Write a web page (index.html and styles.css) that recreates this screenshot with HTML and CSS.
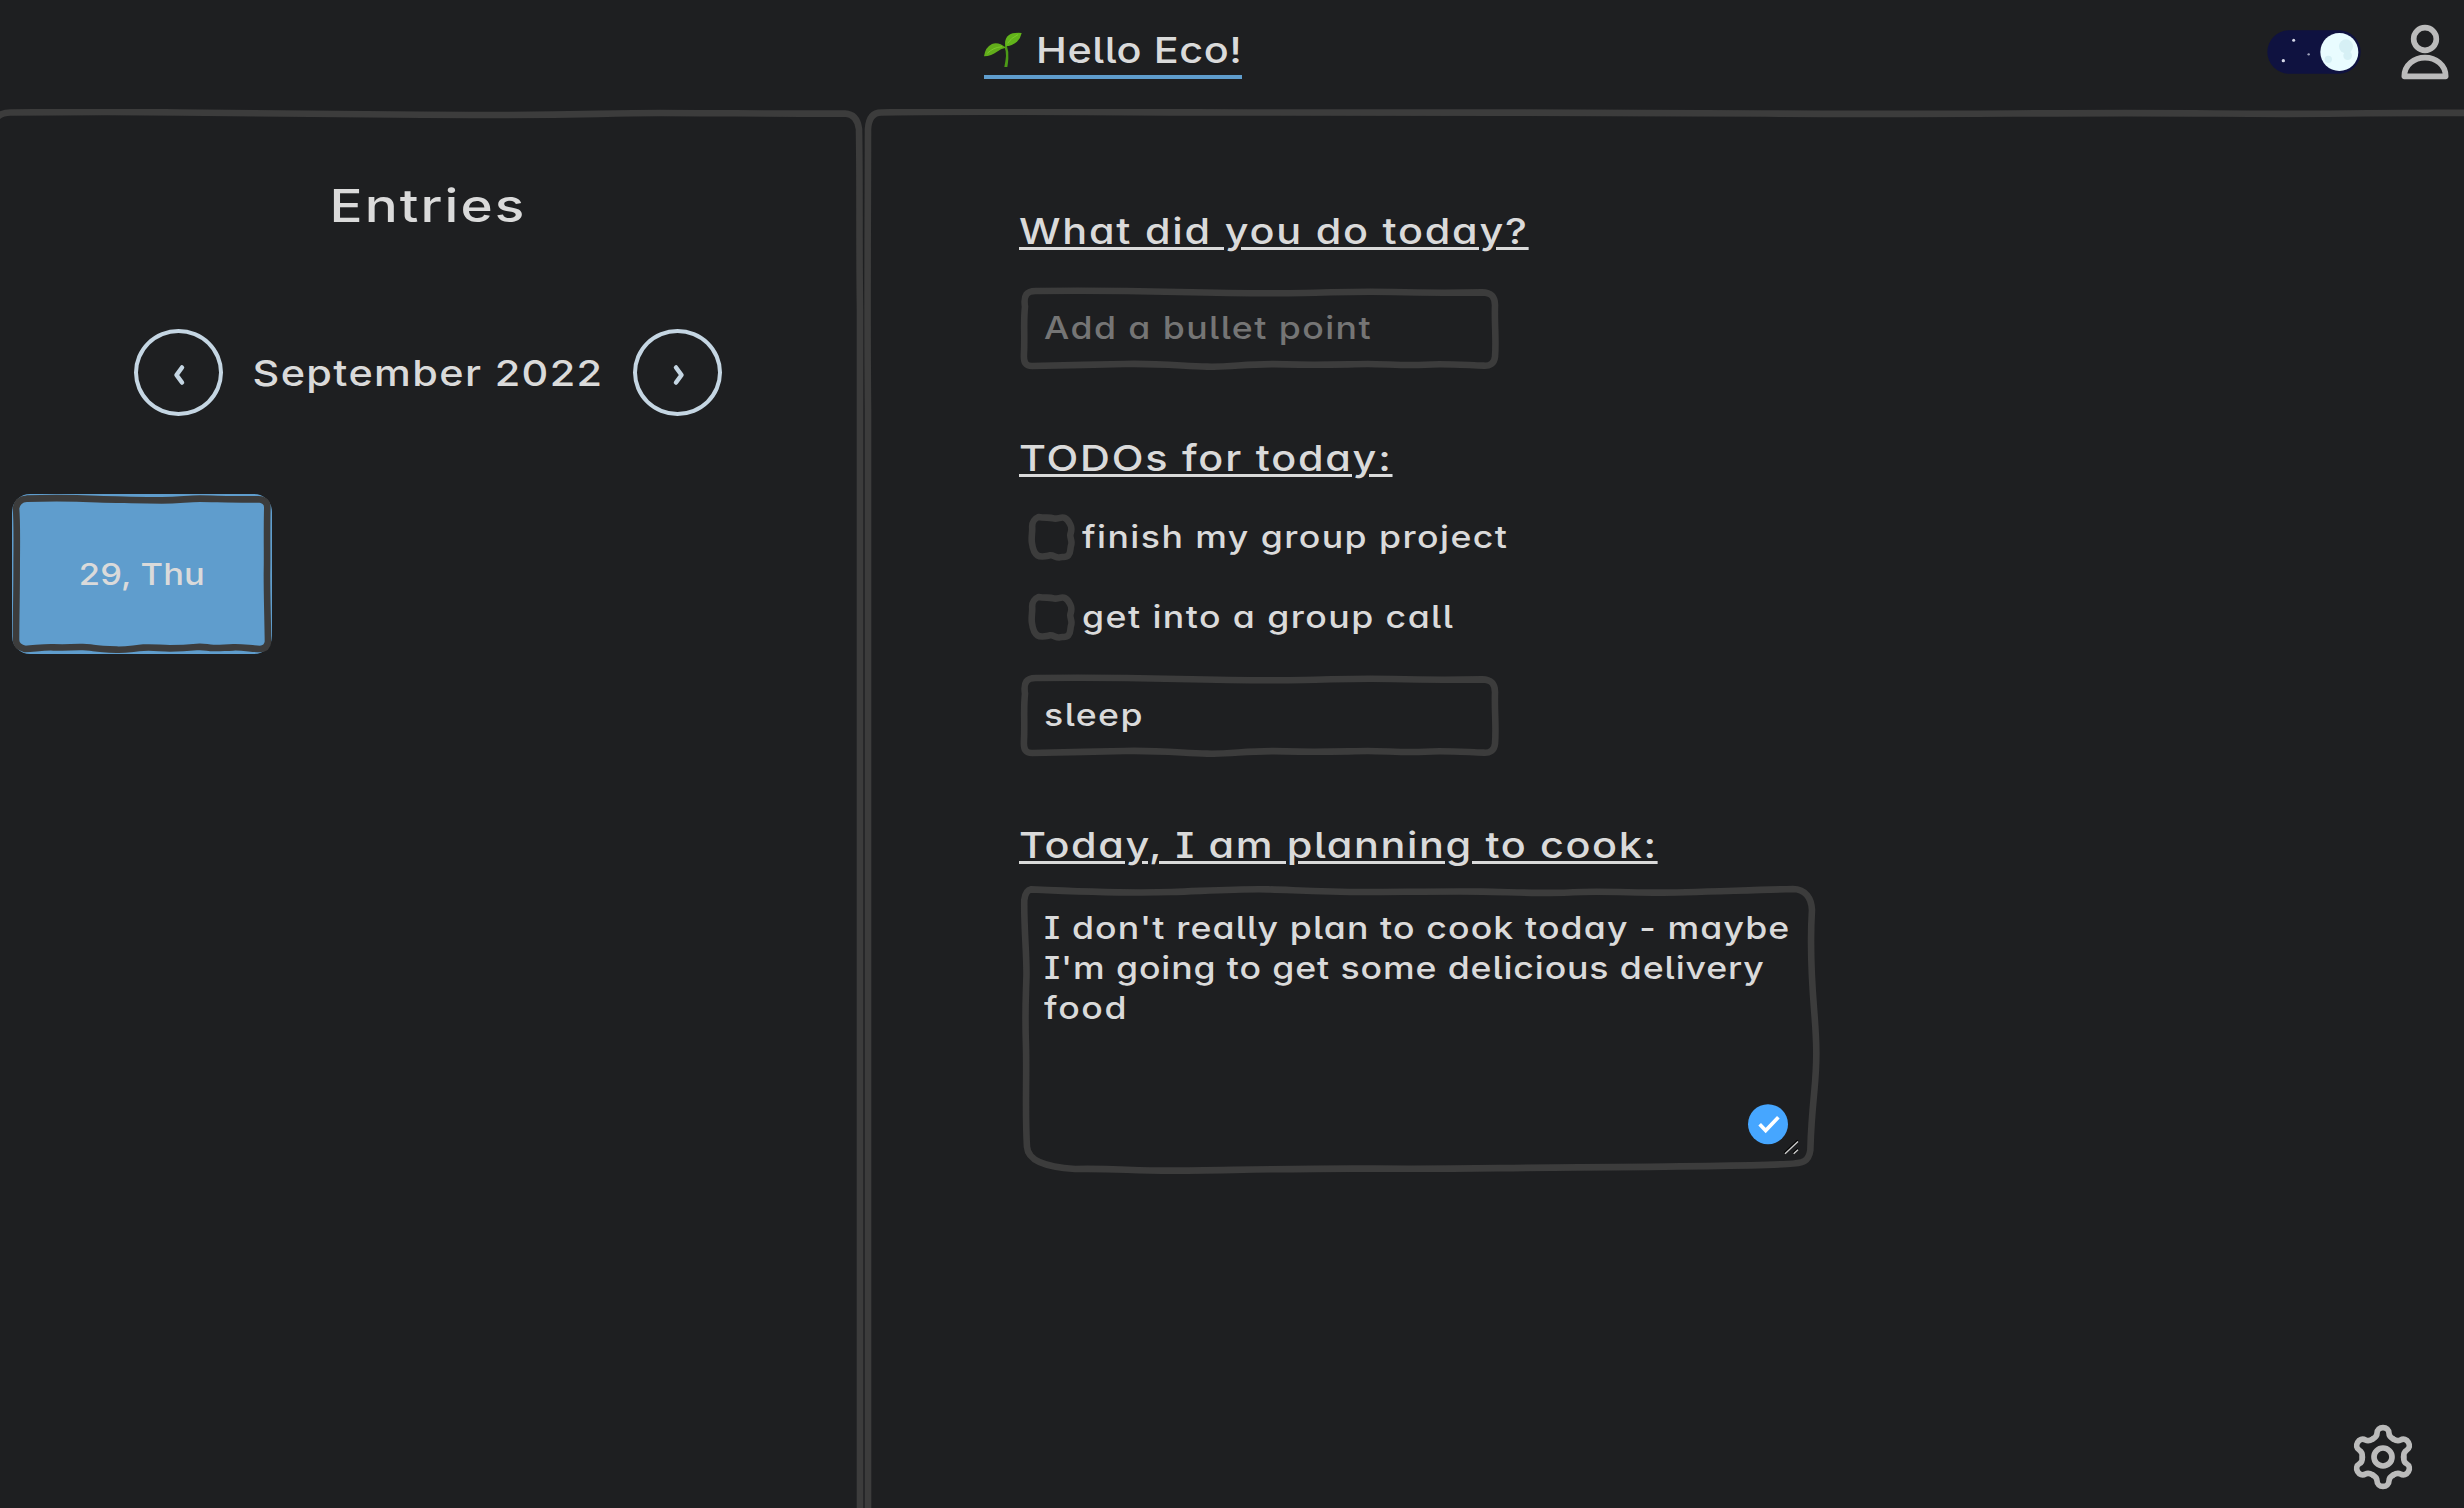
FILE: index.html
```html
<!DOCTYPE html>
<html lang="en">
<head>
<meta charset="utf-8">
<title>Hello Eco!</title>
<link rel="stylesheet" href="styles.css">
</head>
<body>
<header class="topbar">
  <a class="brand">
    <svg class="sprout" viewBox="72 98 114 108">
      <path d="M133 203Q137 183 138 170Q139 155 133 142L140 137Q147 158 145 178Q144 192 142 203Z" fill="#4c9a17"/>
      <path d="M72 171Q76 143 96 134Q116 127 137 145Q122 148 111 157Q95 169 72 171Z" fill="#62ad1b"/>
      <path d="M136 141Q132 118 147 107Q158 99 185 101Q182 117 171 127Q157 139 136 141Z" fill="#62b41b"/>
      <path d="M82 162Q100 144 126 142M143 132Q152 116 174 106" fill="none" stroke="#7cc82c" stroke-width="3"/>
    </svg>
    <span class="brand-text">Hello Eco!</span>
  </a>
  <div class="tools">
    <svg class="toggle" viewBox="80 90 282 132">
      <rect x="81" y="91" width="280" height="130" rx="65" fill="#0f1240"/>
      <g fill="#d5d8e8"><circle cx="160" cy="121" r="4.5"/><circle cx="129" cy="182" r="5"/><circle cx="205" cy="163" r="3.5" opacity=".75"/></g>
      <circle cx="297" cy="156" r="57" fill="#e9fcff"/>
      <g fill="#d6f0f5"><circle cx="317" cy="139" r="21"/><circle cx="322" cy="167" r="13"/><circle cx="264" cy="178" r="11"/></g>
    </svg>
    <svg class="user" viewBox="480 72 144 168">
      <g fill="none" stroke="#bbb" stroke-width="17" stroke-linejoin="round"><circle cx="552" cy="117" r="34"/><path d="M490 229C490 194 520 173 552 173S614 194 614 229Z"/></g>
    </svg>
  </div>
</header>
<main class="main">
  <aside class="entries">
    <svg class="frame" viewBox="0 0 864 1399" preserveAspectRatio="none"><path d="M-4 9Q2 3 12 3.500C60 3 120 2.500 180 3.500S360 5.500 470 6S600 4 660 4S790 5 845 4.500Q857 5 859 20C860 80 859 130 860 200V1402"/></svg>
    <h1 class="entries-title">Entries</h1>
    <div class="month">
      <button class="round"><svg viewBox="0 0 24 32"><path d="M15 8.500L9.500 16L15 23.500"/></svg></button>
      <span class="month-name">September 2022</span>
      <button class="round"><svg viewBox="0 0 24 32"><path d="M10 8.500L15.500 16L10 23.500"/></svg></button>
    </div>
    <div class="card">
      <svg class="frame" viewBox="36 72 780 480" preserveAspectRatio="none"><path d="M80 86C130 84 190 84 230 85S280 88 310 88S430 91 485 91S560 86 600 86S700 89 775 88Q802 90 802 112C800 190 802 250 801 300S803 440 804 515Q802 536 780 537C750 536 730 531 700 532S660 535 640 534S610 529 590 531S540 535 510 535S460 531 430 533S380 540 350 539S300 537 280 534S260 530 240 531S190 533 160 532S110 535 75 537Q48 530 48 510C48 440 50 370 50 300S52 160 48 115Q52 88 80 86Z"/></svg>
      <span class="day">29, Thu</span>
    </div>
  </aside>
  <section class="journal">
    <svg class="frame" viewBox="0 0 1600 1399" preserveAspectRatio="none"><path d="M4 1402V300C3 200 4 100 4 20Q5 3 18 3.500C60 2 200 3 400 3.500S700 3 900 4.500S1200 3 1350 4.500S1500 3 1610 4"/></svg>
    <h2 class="q q1">What did you do today?</h2>
    <div class="field">
      <svg class="frame" viewBox="56 288 1344 252" preserveAspectRatio="none"><path d="M100 303C250 301 380 303 500 306S750 311 850 309S1000 303 1100 306S1250 309 1350 307C1380 308 1386 325 1386 345C1384 400 1390 450 1386 500C1384 522 1370 528 1355 527C1300 525 1240 520 1190 524S1080 522 1030 522S900 527 800 523S650 532 580 530S450 520 350 522S200 526 90 528C72 528 66 518 67 495C70 430 65 400 70 350C65 315 75 303 100 303Z"/></svg>
      <span class="wide hint">Add a bullet point</span>
    </div>
    <h2 class="q q2">TODOs for today:</h2>
    <div class="todos">
      <div class="todo"><svg class="box" viewBox="82 282 135 144" preserveAspectRatio="none"><path d="M112 294C130 298 145 294 155 298S178 292 188 297S200 310 204 318S207 335 204 345S210 365 206 378S206 400 198 409S182 412 173 415S155 407 145 409S120 416 109 409S95 385 93 370S95 340 94 325S102 298 112 294Z"/></svg><span class="wide">finish my group project</span></div>
      <div class="todo"><svg class="box" viewBox="82 282 135 144" preserveAspectRatio="none"><path d="M112 294C130 298 145 294 155 298S178 292 188 297S200 310 204 318S207 335 204 345S210 365 206 378S206 400 198 409S182 412 173 415S155 407 145 409S120 416 109 409S95 385 93 370S95 340 94 325S102 298 112 294Z"/></svg><span class="wide">get into a group call</span></div>
    </div>
    <div class="field">
      <svg class="frame" viewBox="56 288 1344 252" preserveAspectRatio="none"><path d="M100 303C250 301 380 303 500 306S750 311 850 309S1000 303 1100 306S1250 309 1350 307C1380 308 1386 325 1386 345C1384 400 1390 450 1386 500C1384 522 1370 528 1355 527C1300 525 1240 520 1190 524S1080 522 1030 522S900 527 800 523S650 532 580 530S450 520 350 522S200 526 90 528C72 528 66 518 67 495C70 430 65 400 70 350C65 315 75 303 100 303Z"/></svg>
      <span class="wide">sleep</span>
    </div>
    <h2 class="q q2 q-cook">Today, I am planning to cook:</h2>
    <div class="area">
      <svg class="frame" viewBox="37 222 1494 876" preserveAspectRatio="none"><path d="M58 238C150 245 250 250 320 246S450 236 500 238S600 247 700 246S850 244 900 245S1030 252 1070 247S1180 248 1230 248S1400 240 1480 237C1505 238 1515 265 1516 300C1512 400 1515 500 1520 600S1526 750 1520 850S1514 960 1513 1020C1510 1055 1500 1060 1470 1062C1400 1068 1250 1070 1080 1072S850 1078 700 1076S400 1082 320 1082S220 1075 140 1077C80 1070 52 1050 50 1010C46 900 50 800 48 700S48 560 49 500S44 350 45 270Q47 242 58 238Z"/></svg>
      <p class="note wide">I don't really plan to cook today - maybe<br><span class="tight">I'm going to get some delicious delivery</span><br><span class="loose">food</span></p>
      <svg class="saved" viewBox="84 72 156 152"><circle cx="144" cy="132" r="60" fill="#46a6ff"/><path d="M119 132L137 151L175 111" fill="none" stroke="#fff" stroke-width="11"/><path d="M193 218L233 180M219 218L233 205" stroke="#000" stroke-width="4"/><path d="M195 221L234 184M221 221L234 209" stroke="#ccc" stroke-width="4"/></svg>
    </div>
  </section>
</main>
<svg class="gear" viewBox="69 72 180 198">
  <g fill="none" stroke="#bbb" stroke-width="17" stroke-linecap="round">
    <circle cx="159" cy="171" r="27"/>
    <path id="tooth" d="M128 117.300C138 112 141 108 141 100C141 89 149 83 159 83S177 89 177 100C177 108 180 112 190 117.300"/>
    <use href="#tooth" transform="rotate(60 159 171)"/><use href="#tooth" transform="rotate(120 159 171)"/><use href="#tooth" transform="rotate(180 159 171)"/><use href="#tooth" transform="rotate(240 159 171)"/><use href="#tooth" transform="rotate(300 159 171)"/>
  </g>
</svg>
</body>
</html>
```
FILE: styles.css
```css
* { box-sizing: border-box; }
body {
  margin: 0;
  width: 2464px;
  height: 1508px;
  overflow: hidden;
  display: flex;
  flex-direction: column;
  background: #1e1f21;
  color: #dadada;
  font-family: Inter, "Open Sans", sans-serif;
  font-feature-settings: "cv05", "cv08", "cv11";
  font-size: 31px;
  font-weight: 450;
}
h1, h2, p { margin: 0; font-weight: 500; }
svg { display: block; flex: none; }
.topbar { height: 109px; flex: none; display: flex; justify-content: space-between; align-items: flex-start; padding: 24px 15px 0 984px; }
.brand { display: flex; width: 258px; height: 55px; border-bottom: 4px solid #5f9dcd; font-size: 36px; line-height: 52px; font-weight: 500; }
.sprout { width: 38px; height: 36px; margin: 8px 14px 0 0; }
.brand-text { white-space: nowrap; letter-spacing: 0.5px; transform: scaleX(1.15); transform-origin: left; }
.tools { display: flex; gap: 40px; }
.toggle { width: 94px; height: 44px; margin-top: 6px; }
.user { width: 48px; height: 56px; }
.main { flex: 1; display: flex; min-height: 0; }
.entries { width: 864px; flex: none; position: relative; padding: 67px 8px 0 0; }
.journal { flex: 1; position: relative; padding: 98px 0 0 156px; }
.frame { position: absolute; inset: 0; width: 100%; height: 100%; fill: none; }
.frame path, .box path { fill: none; stroke: #3c3c3c; stroke-width: 6.6px; stroke-linejoin: round; vector-effect: non-scaling-stroke; }
.entries-title { font-size: 45px; line-height: 60px; text-align: center; letter-spacing: 1.7px; transform: scaleX(1.22); }
.month { display: flex; justify-content: center; align-items: center; gap: 31px; margin-top: 93px; height: 87px; font-size: 36px; }
.month-name { width: 348px; text-align: center; white-space: nowrap; letter-spacing: 1.2px; transform: scaleX(1.15); }
.round { width: 89px; height: 87px; flex: none; padding: 0; display: flex; align-items: center; justify-content: center; background: none; border: 4px solid #c5d6e3; border-radius: 50%; }
.round svg { width: 24px; height: 32px; margin-top: 4px; fill: none; stroke: #c5d6e3; stroke-width: 4.5; stroke-linecap: round; stroke-linejoin: round; }
.card { position: relative; width: 260px; height: 160px; margin: 78px 0 0 12px; border-radius: 18px; background: #5f9dcd; display: flex; align-items: center; justify-content: center; }
.day { position: relative; font-size: 30px; letter-spacing: 0.1px; transform: scaleX(1.15); }
.q { width: fit-content; font-size: 36px; line-height: 48px; letter-spacing: 1.53px; margin-left: -1px; text-decoration: underline; text-decoration-thickness: 3px; text-underline-offset: 3px; transform: scaleX(1.15); transform-origin: left; }
.q2 { margin-top: 64px; }
.q-cook { letter-spacing: 1.4px; }
.wide { display: inline-block; white-space: nowrap; letter-spacing: 1.25px; transform: scaleX(1.15); transform-origin: left; }
.field { position: relative; width: 480px; height: 84px; line-height: 84px; padding-left: 24px; }
.q1 + .field { margin-top: 31px; }
.hint { color: #757575; }
.todos { display: flex; flex-direction: column; gap: 32px; margin: 31px 0 32px; }
.todo { display: flex; height: 48px; line-height: 48px; gap: 7px; padding-left: 8px; }
.box { width: 47px; height: 48px; }
.area { position: relative; width: 800px; height: 292px; margin-top: 15px; padding: 24px 0 0 24px; }
.note { line-height: 40px; font-weight: 450; letter-spacing: 0.98px; }
.tight { letter-spacing: 0.76px; }
.loose { letter-spacing: 1.4px; }
.saved { position: absolute; left: 728px; top: 220px; width: 52px; height: 51px; }
.gear { position: absolute; left: 2353px; top: 1424px; width: 60px; height: 66px; }
```
